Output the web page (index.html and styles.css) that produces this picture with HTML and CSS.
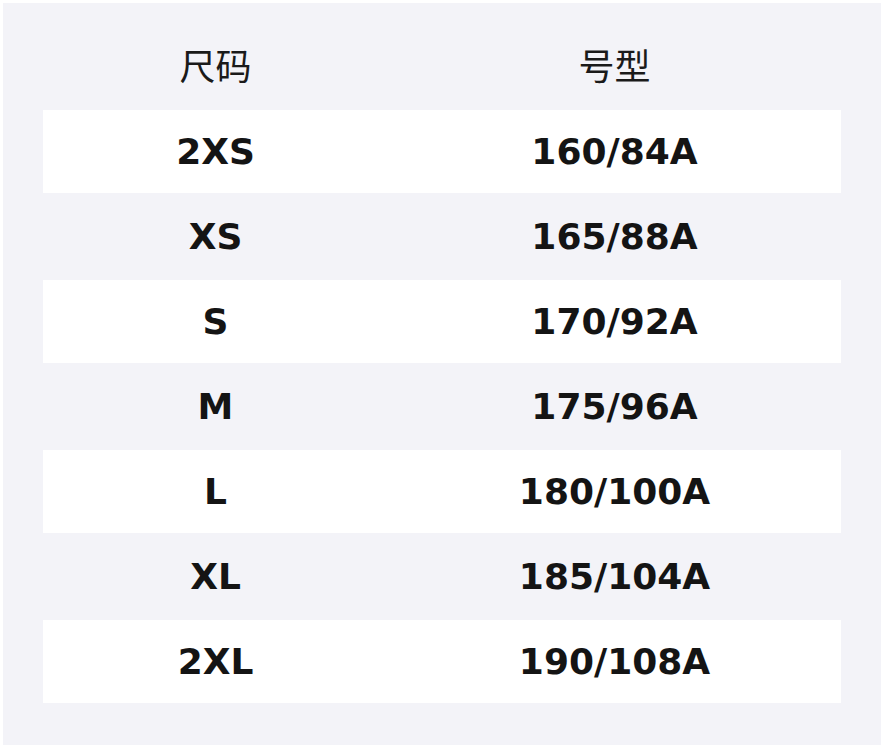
FILE: index.html
```html
<!DOCTYPE html>
<html lang="zh">
<head>
<meta charset="utf-8">
<title>尺码表</title>
<link rel="stylesheet" href="styles.css">
</head>
<body>
<div class="panel">
  <div class="row head">
    <div class="cell">尺码</div>
    <div class="cell">号型</div>
  </div>
  <div class="row odd"><div class="cell">2XS</div><div class="cell">160/84A</div></div>
  <div class="row"><div class="cell">XS</div><div class="cell">165/88A</div></div>
  <div class="row odd"><div class="cell">S</div><div class="cell">170/92A</div></div>
  <div class="row"><div class="cell">M</div><div class="cell">175/96A</div></div>
  <div class="row odd"><div class="cell">L</div><div class="cell">180/100A</div></div>
  <div class="row"><div class="cell">XL</div><div class="cell">185/104A</div></div>
  <div class="row odd"><div class="cell">2XL</div><div class="cell">190/108A</div></div>
</div>
</body>
</html>
```
FILE: styles.css
```css
html, body {
  margin: 0;
  padding: 0;
  background: #ffffff;
}
.panel {
  margin: 3px;
  width: 878px;
  height: 742px;
  box-sizing: border-box;
  padding: 0 40px 42px;
  background: #f3f3f8;
}
.row {
  display: grid;
  grid-template-columns: 345px 1fr;
  height: 85px;
  box-sizing: border-box;
  border-bottom: 2px solid #f3f3f8;
  align-items: center;
  font-family: "DejaVu Sans", sans-serif;
  font-weight: bold;
  font-size: 36px;
  color: #141414;
}
.row.odd {
  background: #ffffff;
}
.cell {
  text-align: center;
  line-height: 40px;
}
.row.head {
  height: 107px;
  border-bottom: 0;
  align-items: start;
  padding-top: 35px;
  font-family: "Noto Sans CJK SC", sans-serif;
  font-weight: normal;
  font-size: 36px;
  color: #1a1a1a;
}
.row.head .cell {
  line-height: 52px;
}
```
